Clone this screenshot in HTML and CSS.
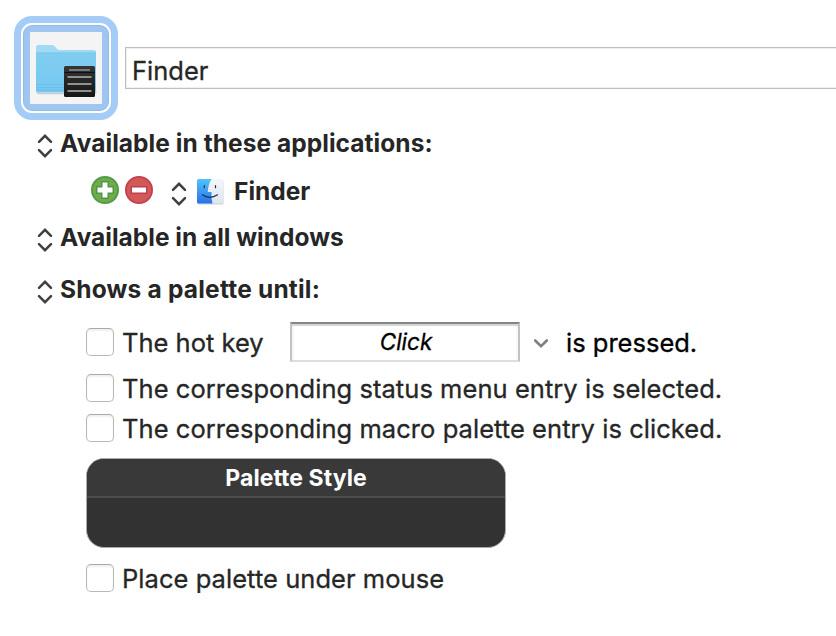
FILE: index.html
```html
<!DOCTYPE html>
<html lang="en">
<head>
<meta charset="utf-8">
<title>Finder</title>
<link rel="stylesheet" href="styles.css">
</head>
<body>
<svg width="0" height="0" class="defs">
  <symbol id="updown" viewBox="0 0 16 26"><path d="M2 8.800 8 2.800 14 8.800M2 17.200 8 23.200 14 17.200" fill="none" stroke="#404040" stroke-width="2.500" stroke-linecap="round" stroke-linejoin="miter"/></symbol>
</svg>
<header class="header">
  <div class="well"><div class="well-inner">
    <svg width="72" height="72" viewBox="0 0 72 72">
      <defs>
        <linearGradient id="folder" x1="0" y1="0" x2="0" y2="1"><stop offset="0" stop-color="#82cdf0"/><stop offset="1" stop-color="#73c8f3"/></linearGradient>
        <linearGradient id="list" x1="0" y1="0" x2="0" y2="1"><stop offset="0" stop-color="#353535"/><stop offset="1" stop-color="#151515"/></linearGradient>
      </defs>
      <path d="M7 59.500q0 2 2 2h55q2 0 2-2" fill="none" stroke="#c9cdd0" stroke-width="1.500"/>
      <path d="M6 15.500q0-2.500 2.500-2.500H22q2 0 3 1.500L27 17q1 1 2.500 1H64q2 0 2 2V58H6z" fill="#a0daf7"/>
      <path d="M6 21h60v37q0 2.500-2.500 2.500h-55Q6 60.500 6 58z" fill="url(#folder)"/>
      <path d="M6 20.800h60M6 52.500h60M6 55.500h60M6 58h60" stroke="#64b6df" stroke-width=".5"/>
      <rect x="34" y="34" width="31" height="31" rx="1.500" fill="url(#list)"/>
      <path d="M34.500 40.500h30" stroke="#101010" stroke-width="1"/>
      <path d="M39 38h21" stroke="#777" stroke-width="2"/>
      <path d="M37.500 45h24M37.500 52h24M37.500 59h24" stroke="#919191" stroke-width="2"/>
    </svg>
  </div></div>
  <div class="name-field">Finder</div>
</header>
<main>
  <div class="row apps"><svg class="updown"><use href="#updown"/></svg><b class="t1">Available in these applications:</b></div>
  <div class="row finder">
    <svg width="28" height="28" viewBox="0 0 28 28"><circle cx="14" cy="14" r="13.100" fill="#72a94b" stroke="#4f9c48" stroke-width="1.800"/><path d="M11.500 6.500h5v5h5v5h-5v5h-5v-5h-5v-5h5z" fill="#fff" stroke="#4b9847" stroke-width="3" paint-order="stroke"/></svg>
    <svg class="minus" width="28" height="28" viewBox="0 0 28 28"><circle cx="14" cy="14" r="13.100" fill="#d25a56" stroke="#c43f53" stroke-width="1.800"/><path d="M7 11.500h14v5H7z" fill="#fff" stroke="#c03c50" stroke-width="3" paint-order="stroke"/></svg>
    <svg class="updown"><use href="#updown"/></svg>
    <svg class="face" width="28" height="28" viewBox="0 0 28 28">
      <defs><linearGradient id="blue" x1="0" y1="0" x2="0" y2="1"><stop offset="0" stop-color="#50c5fa"/><stop offset="1" stop-color="#2a70e9"/></linearGradient><linearGradient id="pale" x1="0" y1="0" x2="0" y2="1"><stop offset="0" stop-color="#f5f6f8"/><stop offset="1" stop-color="#dce6f2"/></linearGradient></defs>
      <rect x="1.500" y="2" width="26" height="24.500" rx="1.500" fill="#d0d0d0"/>
      <rect x="1" y="1" width="26.500" height="24.500" rx="1.500" fill="url(#pale)"/>
      <path d="M2.500 1H15.500Q12 7 11.800 14H15.500Q15 20 16.500 25.500h-14Q1 25.500 1 24V2.500Q1 1 2.500 1" fill="url(#blue)"/>
      <path d="M8.300 7.500v2.200M19.500 7.500v2.200M6.300 16.800q7.800 5 15.200 0" fill="none" stroke="#18324c" stroke-width="1.200" stroke-linecap="round"/>
    </svg>
    <b class="t2">Finder</b>
  </div>
  <div class="row windows"><svg class="updown"><use href="#updown"/></svg><b class="t3">Available in all windows</b></div>
  <div class="row shows"><svg class="updown"><use href="#updown"/></svg><b class="t4">Shows a palette until:</b></div>
  <div class="row hotkey"><i class="check"></i><span class="label t5">The hot key</span><div class="key-field">Click</div>
    <svg class="down" width="16" height="12" viewBox="0 0 16 12"><path d="M2.200 2.500 8 8.200 13.800 2.500" fill="none" stroke="#808080" stroke-width="2.600" stroke-linecap="round"/></svg>
    <span class="pressed">is pressed.</span></div>
  <div class="row status"><i class="check"></i><span class="label">The corresponding status menu entry is selected.</span></div>
  <div class="row macro"><i class="check"></i><span class="label">The corresponding macro palette entry is clicked.</span></div>
  <div class="palette"><div class="palette-title">Palette Style</div></div>
  <div class="row mouse"><i class="check"></i><span class="label">Place palette under mouse</span></div>
</main>
</body>
</html>
```
FILE: styles.css
```css
* { box-sizing: border-box; }
body { margin: 0; width: 836px; height: 636px; overflow: hidden; background: #fff; color: #262626; font-family: Inter, "Liberation Sans", sans-serif; font-size: 25.5px; }
svg { display: block; flex: none; }
.defs { position: absolute; }
.header { display: flex; height: 120px; padding: 16px 0 0 14px; }
.well { flex: none; width: 104px; height: 104px; padding: 7px; border-radius: 18px; background: #a5cbf7; }
.well-inner { width: 90px; height: 90px; padding: 7px; border: 2px solid #fff; border-radius: 11px; background: #9fc5f1; box-shadow: inset 0 0 0 1px #94bae8; }
.well-inner svg { background: #f4f4f4; border-radius: 1px; }
.name-field { flex: 1; height: 42px; margin: 31px 0 0 7px; padding-left: 6px; border: 1px solid #bebebe; border-right: 0; box-shadow: inset 1px 1px #eee, inset 0 -1px #f0f0f0; line-height: 45px; white-space: nowrap; -webkit-text-stroke: .3px; }
.row { display: flex; align-items: center; white-space: nowrap; line-height: 32px; }
.row b { font-size: 24.5px; font-weight: 700; }
.updown { width: 16px; height: 26px; position: relative; top: 2px; }
.row > .updown + b { margin: -2px 0 0 7px; }
.apps { height: 48px; padding-left: 37px; }
.t1 { letter-spacing: .05px; }
.finder { height: 46px; padding-left: 91px; }
.finder > svg:first-child, .minus { position: relative; top: -1px; }
.minus { margin-left: 6px; }
.finder .updown { top: 3px; margin-left: 18px; }
.face { margin: 2px 0 0 9px; }
.finder b { margin-left: 10px; }
.windows { height: 48px; padding-left: 37px; }
.shows { height: 56px; padding-left: 37px; }
.t4 { letter-spacing: .2px; }
.check { flex: none; width: 28px; height: 28px; border: 1px solid #b8b8b8; border-top-color: #a9a9a9; border-radius: 5px; background: #fff; box-shadow: inset 0 2px 2px #f0f0f0; }
.label { margin: 2px 0 0 8px; letter-spacing: .05px; -webkit-text-stroke: .3px; }
.hotkey, .status, .macro, .mouse { padding-left: 86px; }
.hotkey { height: 48px; }
.t5 { width: 168px; letter-spacing: 0; }
.key-field { width: 230px; height: 40px; padding-left: 2px; border: 2px solid; border-color: #858585 #c2c2c2 #dedede; box-shadow: inset 0 2px #d6d6d6, inset 2px 0 #f7f7f7, inset -2px 0 #f7f7f7; color: #000; font-size: 22.5px; font-style: italic; line-height: 36px; text-align: center; -webkit-text-stroke: .3px; }
.down { margin: 3px 0 0 13px; }
.pressed { margin: 2px 0 0 17px; color: #000; -webkit-text-stroke: .3px; }
.status { height: 44px; }
.macro { height: 36px; }
.palette { width: 420px; height: 90px; margin: 12px 0 0 86px; border: 1px solid #aaa; border-radius: 18px; background: #323232; overflow: hidden; }
.palette-title { height: 39px; border-bottom: 2px solid #4c4c4c; background: #393939; color: #fff; font-size: 23px; font-weight: 700; line-height: 39px; text-align: center; letter-spacing: .05px; }
.mouse { height: 40px; margin-top: 10px; }
```
